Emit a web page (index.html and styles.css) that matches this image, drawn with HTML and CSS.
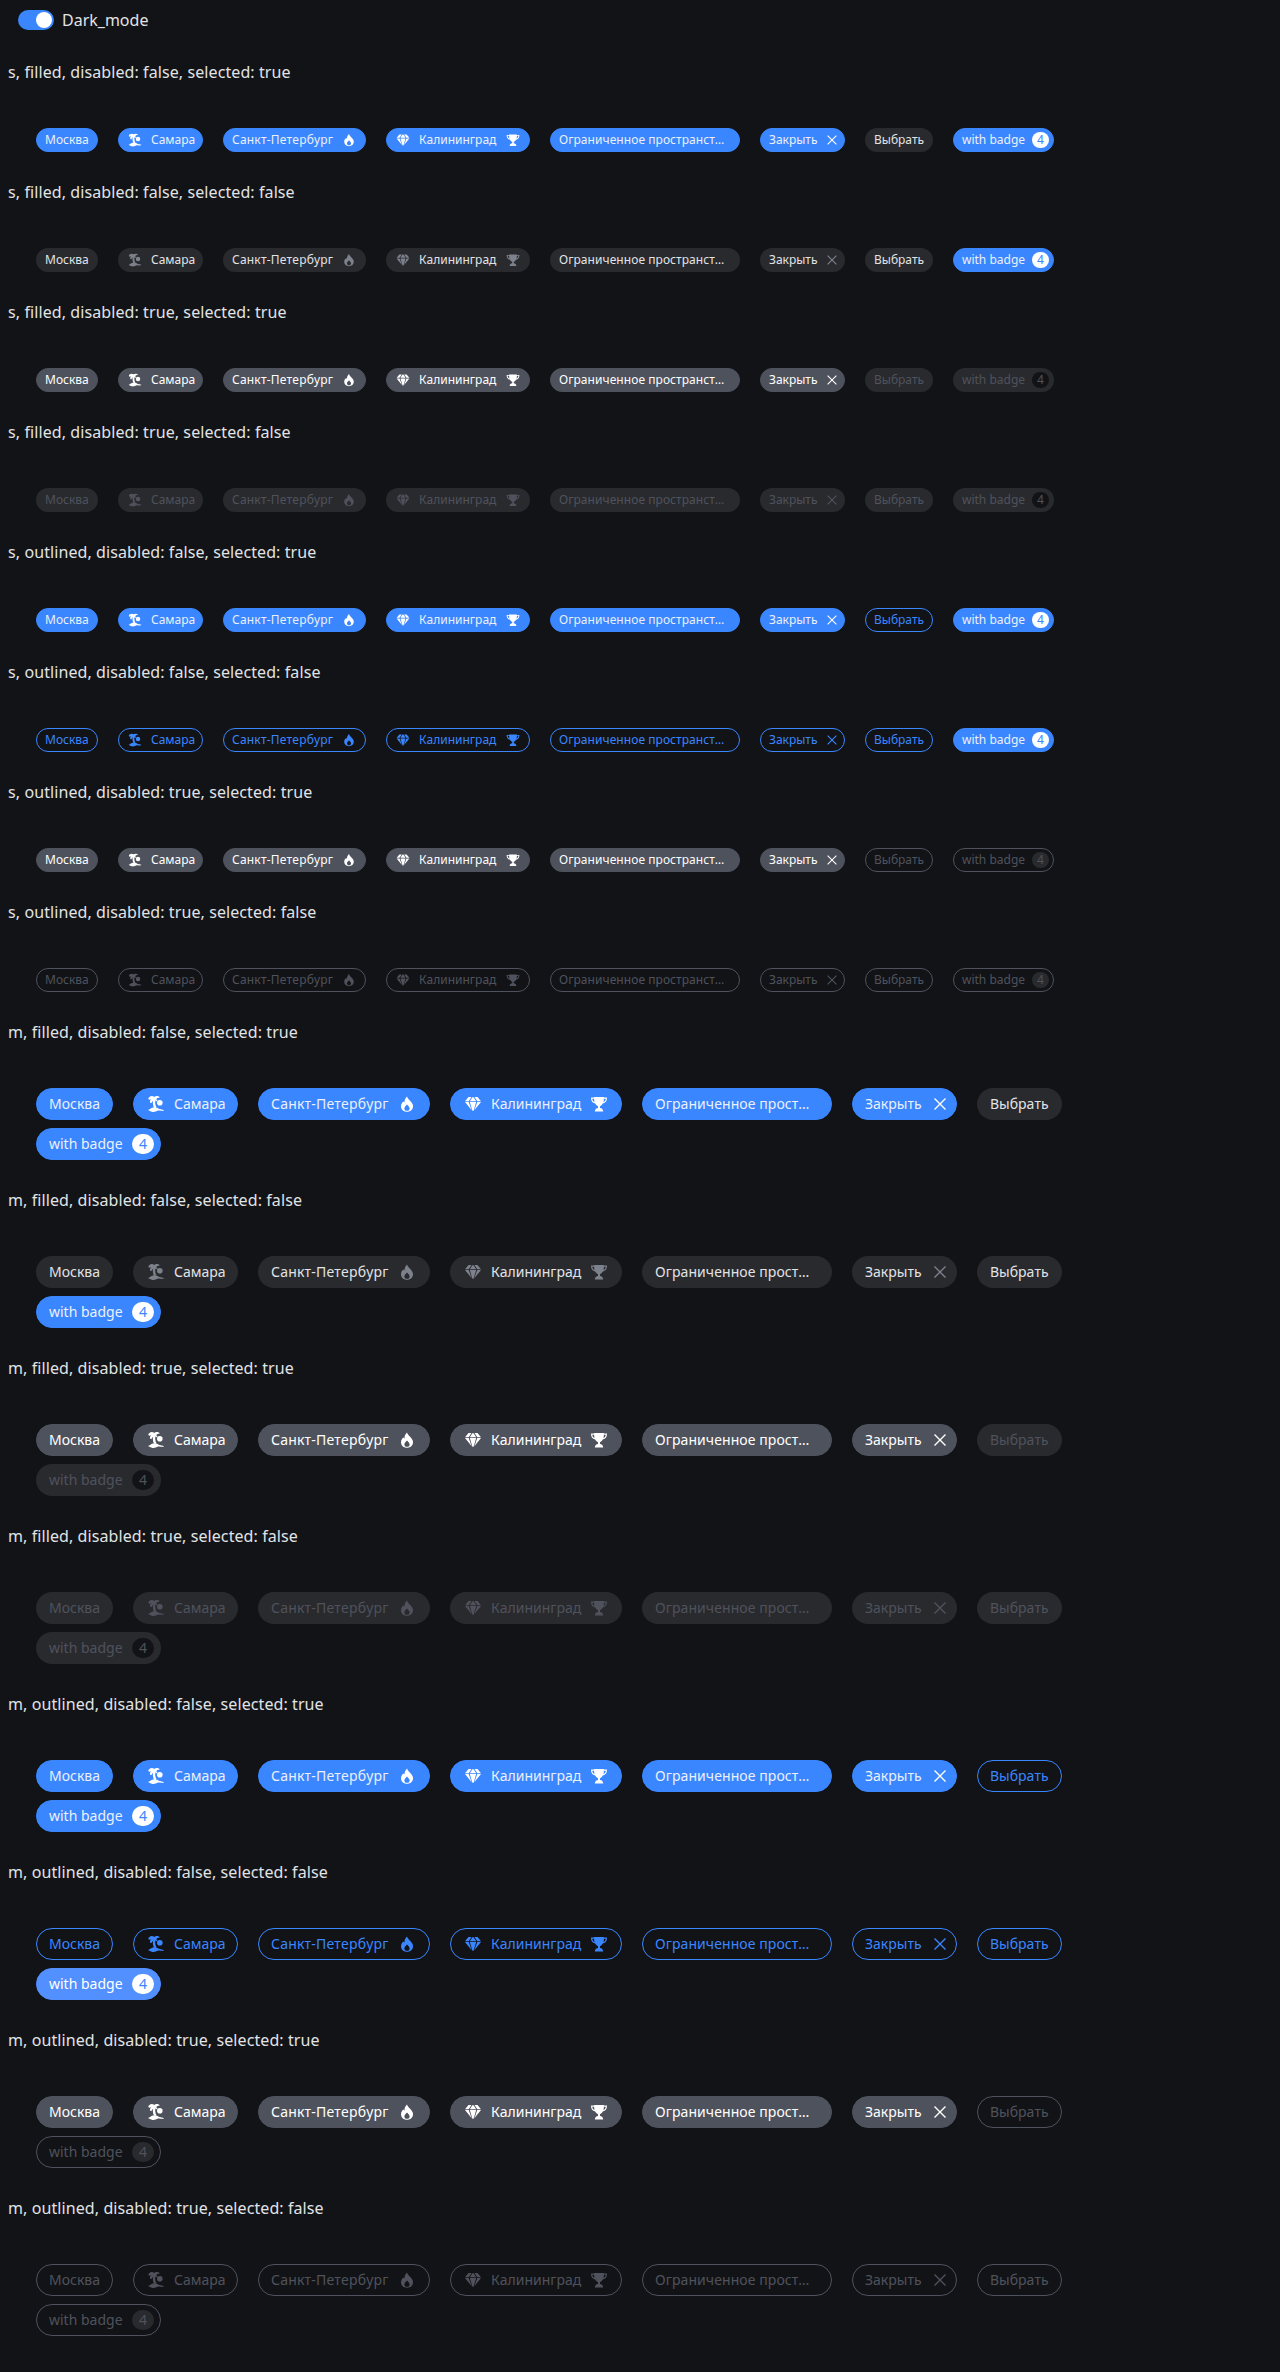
FILE: index.html
```html
<!DOCTYPE html>
<html lang="ru">
<head>
<meta charset="utf-8">
<title>Chips</title>
<link rel="stylesheet" href="styles.css">
</head>
<body>
<svg class="sprite" aria-hidden="true">
  <symbol id="island" viewBox="0 0 20 20"><path d="M3.2 3.2C4.6 1.8 6.9 1.8 8.2 2.9C9.6 1.7 12.6 1.8 13.8 3.6L11.4 4L10.2 5.2C11.3 5.8 11.6 6.7 11.4 7.4L9.4 6.6C9 9 9.2 11.3 10.6 13.4L8.2 13.8C6.7 11.2 6.6 8.6 7.2 6.4L5.4 9L4.3 9C3.6 7.4 4.1 6.2 5.3 5.3L3 5.8C2 4.8 2.3 3.9 3.2 3.2Z"/><circle cx="13.8" cy="8.8" r="2.8"/><path d="M2 16C3.8 15.6 4.4 14 7 13.4C10.3 12.6 12 14.4 13.4 15C15 15.5 16.6 15.2 18.2 16.4C15.5 17.4 14 16 12.2 16.6C10 17.6 8.2 18.4 5.8 17.8C4.4 17.5 3.4 16.9 2 16Z"/></symbol>
  <symbol id="flame" viewBox="0 0 20 20"><path fill-rule="evenodd" d="M10 2.5C10.7 4.8 12.4 5.7 14 7.8C15.4 9.6 16 10.7 16 12.2C16 15.5 13.4 17.7 10 17.7S4 15.5 4 12.2C4 10 5.2 8.4 6.4 7.4L7.5 8.4C7.4 5.8 8.5 4 10 2.5ZM10 10.4C8.6 12 7.4 13 7.4 14.2A2.6 2.6 0 0 0 12.6 14.2C12.6 13 11.4 12 10 10.4Z"/></symbol>
  <symbol id="gem" viewBox="0 0 20 20"><path d="M5.5 3H8.5L5.7 7.2H2ZM9.4 3.2H10.6L13.2 7.2H6.8ZM11.5 3H14.5L18 7.2H14.3ZM2 8H5.7L8.7 16.3ZM6.8 8H13.2L10.6 16.8H9.4ZM14.3 8H18L11.3 16.3Z"/></symbol>
  <symbol id="trophy" viewBox="0 0 20 20"><path fill-rule="evenodd" d="M5.2 3H14.8V3.6H18C18 7.2 16.5 9.1 13.8 9.6C12.9 11.2 12 11.9 11 12.2V14C12.8 14.2 14 15.2 14.2 17.5H5.8C6 15.2 7.2 14.2 9 14V12.2C8 11.9 7.1 11.2 6.2 9.6C3.5 9.1 2 7.2 2 3.6H5.2ZM3.3 4.8C3.5 6.6 4.2 7.7 5.6 8.1C5.2 7.1 5.1 5.9 5.1 4.8ZM16.7 4.8H14.9C14.9 5.9 14.8 7.1 14.4 8.1C15.8 7.7 16.5 6.6 16.7 4.8Z"/></symbol>
  <symbol id="cross" viewBox="0 0 20 20"><path d="M4.5 4.5L15.5 15.5M15.5 4.5L4.5 15.5" fill="none" stroke="currentColor" stroke-width="1.4"/></symbol>
</svg>
<label class="switch"><span class="track"><span class="thumb"></span></span>Dark_mode</label>
<main id="list"></main>
<script src="chips.js"></script>
</body>
</html>
```
FILE: styles.css
```css
* { box-sizing: border-box; }
body {
  margin: 0;
  min-height: 2372px;
  background: #121316;
  color: #e1e3e6;
  font: 16px/24px "Noto Sans", sans-serif;
  font-kerning: none;
}
.sprite { display: none; }
.switch { display: flex; align-items: center; gap: 8px; height: 24px; margin: 8px 0 0 18px; }
.track { display: flex; justify-content: flex-end; width: 36px; height: 20px; padding: 2px; border-radius: 10px; background: #3a86ff; }
.thumb { width: 16px; height: 16px; border-radius: 50%; background: #fff; }
.title { margin: 28px 0 44px 8px; height: 24px; font-size: 16px; font-weight: 400; line-height: 24px; letter-spacing: 0.09px; }
.row { display: flex; flex-wrap: wrap; gap: 8px 20px; width: 1100px; margin-left: 36px; }
.chip {
  display: flex; align-items: center; gap: 8px;
  height: 24px; padding: 0 8px;
  border: 1px solid transparent; border-radius: 16px;
  font-size: 12px; line-height: 16px; white-space: nowrap;
}
.icon { flex: none; width: 16px; height: 16px; fill: currentColor; }
.icon:last-child, .badge { margin-left: auto; }
.closable, .badged { gap: 4px; padding-right: 4px; }
.badge { flex: none; width: 17px; height: 16px; border-radius: 10px; text-align: center; background: #fff; color: #3a86ff; }

.plain { width: 62px; }
.before { width: 85px; }
.after { width: 143px; letter-spacing: 0.2px; }
.both { width: 144px; }
.limited { width: 190px; letter-spacing: 0.06px; }
.closable { width: 85px; }
.choice { width: 68px; }
.badged { width: 101px; }

.m .chip { height: 32px; padding: 0 12px; font-size: 14px; line-height: 20px; }
.m .icon { width: 20px; height: 20px; }
.m .closable, .m .badged { padding-right: 6px; }
.m .badge { width: 22px; height: 20px; }
.m .plain { width: 77px; }
.m .before { width: 105px; }
.m .after, .m .both { width: 172px; }
.m .limited { letter-spacing: 0.08px; }
.m .closable { width: 105px; }
.m .choice { width: 85px; }
.m .badged { width: 125px; }

.chip.active { background: #3a86ff; border-color: #3a86ff; color: #fff; }
.chip.active .text { color: #ebf0f8; }
.chip.hover { background: #5290ff; border-color: #5290ff; }
.chip.hover .text { color: #fff; }
.chip.locked { background: #4e525d; border-color: #4e525d; color: #fff; }
.chip.filled { background: #292a2e; color: #e1e3e6; }
.chip.filled .icon { color: #7d818c; }
.chip.filled-off { background: #292a2e; color: #4f525c; }
.chip.filled-off .badge { background: #121316; color: #4f525c; }
.chip.outlined { border-color: #3a86ff; color: #3a86ff; }
.chip.outlined-off { border-color: #4f525c; color: #4f525c; }
.chip.outlined-off .badge { background: #292a2e; color: #4f525c; }
```
FILE: chips.js
```js
const icon = (name) => `<svg class="icon"><use href="#${name}"/></svg>`;
const label = (text) => `<span class="text">${text}</span>`;
const limit = { s: 23, m: 18 };
const shorten = (text, length) => text.slice(0, length) + '…';
const chips = (size) => [
  [label('Москва'), 'plain'],
  [icon('island') + label('Самара'), 'before'],
  [label('Санкт-Петербург') + icon('flame'), 'after'],
  [icon('gem') + label('Калининград') + icon('trophy'), 'both'],
  [label(shorten('Ограниченное пространство', limit[size])), 'limited'],
  [label('Закрыть') + icon('cross'), 'closable'],
  [label('Выбрать'), 'choice'],
  [label('with badge') + '<span class="badge">4</span>', 'badged'],
];

let html = '';
for (const size of ['s', 'm'])
  for (const view of ['filled', 'outlined'])
    for (const disabled of [false, true])
      for (const selected of [true, false]) {
        html += `<h2 class="title">${size}, ${view}, disabled: ${disabled}, selected: ${selected}</h2><div class="row ${size}">`;
        for (const [content, kind] of chips(size)) {
          const idle = disabled ? `${view}-off` : view;
          let state = selected ? (disabled ? 'locked' : 'active') : idle;
          if (kind === 'choice') state = idle;
          if (kind === 'badged') state = disabled ? idle : 'active';
          if (kind === 'badged' && size === 'm' && view === 'outlined' && !disabled && !selected) state += ' hover';
          html += `<div class="chip ${kind} ${state}">${content}</div>`;
        }
        html += '</div>';
      }
document.getElementById('list').innerHTML = html;
```
